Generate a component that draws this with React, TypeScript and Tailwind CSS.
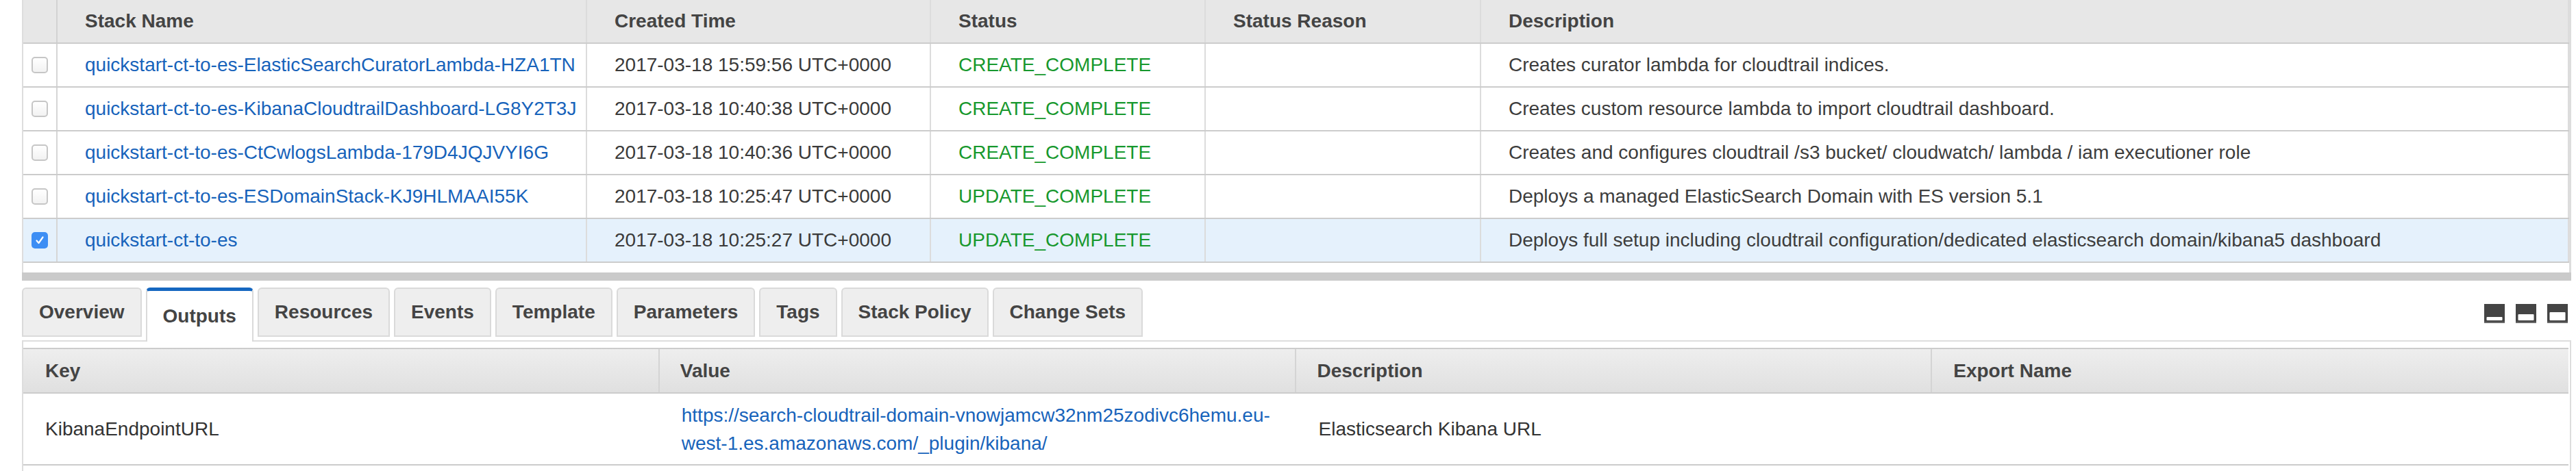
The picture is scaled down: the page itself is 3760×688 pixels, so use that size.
import React from 'react';

interface StackRow {
  name: string;
  created: string;
  status: string;
  description: string;
  selected?: boolean;
}

const stacks: StackRow[] = [
  {
    name: 'quickstart-ct-to-es-ElasticSearchCuratorLambda-HZA1TN',
    created: '2017-03-18 15:59:56 UTC+0000',
    status: 'CREATE_COMPLETE',
    description: 'Creates curator lambda for cloudtrail indices.',
  },
  {
    name: 'quickstart-ct-to-es-KibanaCloudtrailDashboard-LG8Y2T3J',
    created: '2017-03-18 10:40:38 UTC+0000',
    status: 'CREATE_COMPLETE',
    description: 'Creates custom resource lambda to import cloudtrail dashboard.',
  },
  {
    name: 'quickstart-ct-to-es-CtCwlogsLambda-179D4JQJVYI6G',
    created: '2017-03-18 10:40:36 UTC+0000',
    status: 'CREATE_COMPLETE',
    description: 'Creates and configures cloudtrail /s3 bucket/ cloudwatch/ lambda / iam executioner role',
  },
  {
    name: 'quickstart-ct-to-es-ESDomainStack-KJ9HLMAAI55K',
    created: '2017-03-18 10:25:47 UTC+0000',
    status: 'UPDATE_COMPLETE',
    description: 'Deploys a managed ElasticSearch Domain with ES version 5.1',
  },
  {
    name: 'quickstart-ct-to-es',
    created: '2017-03-18 10:25:27 UTC+0000',
    status: 'UPDATE_COMPLETE',
    description: 'Deploys full setup including cloudtrail configuration/dedicated elasticsearch domain/kibana5 dashboard',
    selected: true,
  },
];

const tabs = ['Overview', 'Outputs', 'Resources', 'Events', 'Template', 'Parameters', 'Tags', 'Stack Policy', 'Change Sets'];

const gridCols = 'grid grid-cols-[50px_773px_502px_401px_402px_1fr]';
const cell = 'flex items-center pl-[40px] overflow-hidden whitespace-nowrap border-r-2 border-[#dcdcdc]';

const Checkbox: React.FC<{ checked?: boolean }> = ({ checked }) =>
  checked ? (
    <div className="w-[24px] h-[24px] rounded-[5px] bg-[#3d8ef4] flex items-center justify-center">
      <svg width="16" height="16" viewBox="0 0 16 16">
        <path d="M3.5 8.5 L6.5 12 L12.5 3.5" fill="none" stroke="#ffffff" strokeWidth="2.2" strokeLinecap="round" strokeLinejoin="round" />
      </svg>
    </div>
  ) : (
    <div className="w-[24px] h-[24px] rounded-[5px] border-2 border-[#c6c6c6] bg-gradient-to-b from-white to-[#f2f2f2]" />
  );

const PanelIcon: React.FC<{ inner: number }> = ({ inner }) => (
  <svg width="30" height="28" viewBox="0 0 30 28">
    <rect x="0" y="0" width="30" height="28" fill="#444444" />
    <rect x="0" y="26" width="30" height="2" fill="#6a6a6a" />
    <rect x="3.5" y={24 - inner} width="23" height={inner} rx="1" fill="#ffffff" />
  </svg>
);

export default function App() {
  return (
    <div className="min-h-screen bg-white font-['Liberation_Sans',Arial,sans-serif] text-[28px] text-[#444444]">
      <div className="ml-[32px] w-[3721px]">
        {/* stacks list */}
        <div className="border-l-2 border-r-[3px] border-[#dddddd] pb-[14px]">
          <div className={`${gridCols} h-[64px] bg-[#e7e7e7] border-b-2 border-[#cccccc] font-bold`}>
            <div className="border-r-2 border-[#d2d2d2]" />
            <div className={cell}>Stack Name</div>
            <div className={cell}>Created Time</div>
            <div className={cell}>Status</div>
            <div className={cell}>Status Reason</div>
            <div className={`${cell} border-r-0`}>Description</div>
          </div>
          {stacks.map((s) => (
            <div
              key={s.name}
              className={`${gridCols} h-[64px] border-b-2 border-[#cccccc] ${s.selected ? 'bg-[#e5f1fc]' : 'bg-white'}`}
            >
              <div className="flex items-center justify-center border-r-2 border-[#d6d6d6]">
                <Checkbox checked={s.selected} />
              </div>
              <div className={`${cell} text-[#1763bb]`}>{s.name}</div>
              <div className={`${cell} text-[#3a3a3a]`}>{s.created}</div>
              <div className={`${cell} text-[#17982d]`}>{s.status}</div>
              <div className={cell}></div>
              <div className={`${cell} border-r-0 text-[#3d3d3d]`}>{s.description}</div>
            </div>
          ))}
        </div>
        <div className="h-[12px] bg-[#cacaca]" />

        {/* tabs */}
        <div className="mt-[10px] flex items-start gap-[6px] border-b-2 border-[#dddddd]">
          {tabs.map((t) =>
            t === 'Outputs' ? (
              <div
                key={t}
                className="relative -mb-[2px] h-[79px] px-[23px] flex items-center rounded-t-[6px] border-x-2 border-[#dadada] border-t-[5px] border-t-[#1567c0] bg-white font-bold"
              >
                {t}
              </div>
            ) : (
              <div
                key={t}
                className="h-[72px] px-[23px] flex items-center rounded-t-[6px] border-2 border-[#dadada] bg-[#eeeeee] font-bold"
              >
                {t}
              </div>
            )
          )}
          <div className="ml-auto mr-[5px] self-center flex gap-[16px] pb-[2px]">
            <PanelIcon inner={5} />
            <PanelIcon inner={9} />
            <PanelIcon inner={12} />
          </div>
        </div>

        {/* outputs */}
        <div className="border-x-2 border-[#dddddd] pt-[9px] pr-[2px] h-[189px]">
          <div className="grid grid-cols-4 h-[67px] border-y-2 border-[#cccccc] bg-gradient-to-b from-[#eeeeee] to-[#e0e0e0] font-bold">
            <div className="flex items-center pl-[32px] border-r-2 border-[#d4d4d4]">Key</div>
            <div className="flex items-center pl-[30px] border-r-2 border-[#d4d4d4]">Value</div>
            <div className="flex items-center pl-[31px] border-r-2 border-[#d4d4d4]">Description</div>
            <div className="flex items-center pl-[31px]">Export Name</div>
          </div>
          <div className="grid grid-cols-4 h-[105px] border-b-2 border-[#cccccc] text-[#333333]">
            <div className="flex items-center pl-[32px]">KibanaEndpointURL</div>
            <div className="flex items-center pl-[32px] text-[#1763bb] leading-[41px] whitespace-nowrap">
              <div>
                <div>https://search-cloudtrail-domain-vnowjamcw32nm25zodivc6hemu.eu-</div>
                <div>west-1.es.amazonaws.com/_plugin/kibana/</div>
              </div>
            </div>
            <div className="flex items-center pl-[33px]">Elasticsearch Kibana URL</div>
            <div className="flex items-center pl-[33px]"></div>
          </div>
        </div>
      </div>
    </div>
  );
}
